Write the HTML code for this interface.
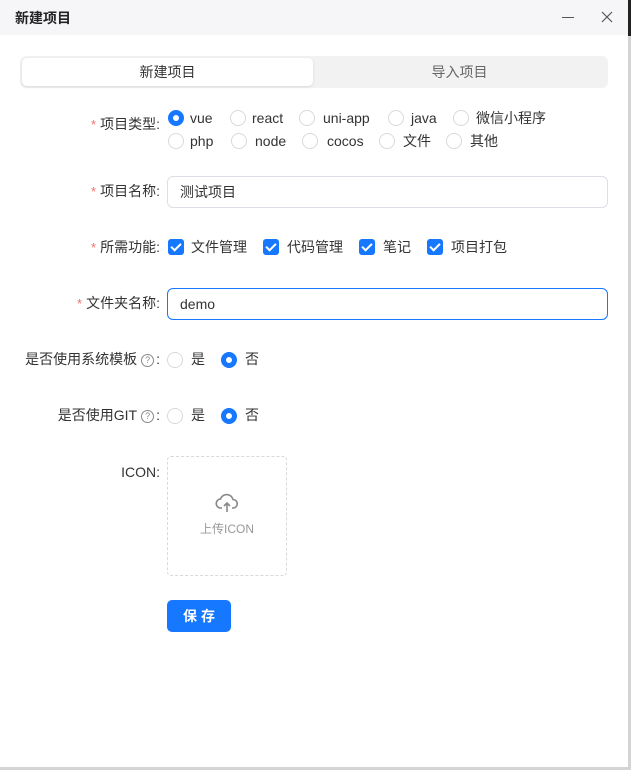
<!DOCTYPE html>
<html><head><meta charset="utf-8"><style>
*{margin:0;padding:0;box-sizing:border-box}
body{width:631px;height:770px;overflow:hidden;background:#fff;font-family:"Liberation Sans","Noto Sans CJK SC",sans-serif;font-size:14px;color:#333;position:relative}
.a{position:absolute;white-space:nowrap}
.t{line-height:20px;height:20px}
.lab{position:absolute;right:471px;line-height:20px;white-space:nowrap}
.req{color:#f56c6c;margin-right:4px;font-size:13px}
.r{position:absolute;width:16px;height:16px;border-radius:50%;border:1px solid #d9d9d9;background:#fff}
.r.on{border:5px solid #1677ff}
.c{position:absolute;width:16px;height:16px;border-radius:3px;background:#1677ff}
.c::after{content:"";position:absolute;left:5px;top:2px;width:4px;height:8px;border:solid #fff;border-width:0 2px 2px 0;transform:rotate(45deg)}
.q{display:inline-block;width:13px;height:13px;border:1px solid #888;border-radius:50%;font-size:9px;line-height:11px;text-align:center;color:#888;vertical-align:1px;margin:0 2px 0 4px}
</style></head><body>
<div class="a" style="left:0;top:0;width:631px;height:35px;background:#f6f6f9"></div>
<div class="a" style="left:15px;top:8px;font-size:14px;font-weight:bold;line-height:20px;color:#222">新建项目</div>
<div class="a" style="left:562px;top:17px;width:12px;height:1px;background:#555"></div>
<svg class="a" style="left:601px;top:11px" width="12" height="12"><path d="M1 1L11 11M11 1L1 11" stroke="#555" stroke-width="1.2"/></svg>
<div class="a" style="left:628px;top:0;width:3px;height:770px;background:#d4d4d4"></div>
<div class="a" style="left:0;top:767px;width:631px;height:3px;background:#d4d4d4"></div>
<div class="a" style="left:628px;top:0;width:3px;height:36px;background:#222"></div>

<div class="a" style="left:20px;top:56px;width:588px;height:32px;background:#f2f2f3;border-radius:6px"></div>
<div class="a" style="left:22px;top:58px;width:291px;height:28px;background:#fff;border-radius:5px;box-shadow:0 1px 3px rgba(0,0,0,.1);text-align:center;line-height:28px;color:#333">新建项目</div>
<div class="a" style="left:313px;top:58px;width:293px;height:28px;text-align:center;line-height:28px;color:#666">导入项目</div>

<div class="lab" style="top:114px"><span class="req">*</span>项目类型:</div>
<div class="r on" style="left:168px;top:110px"></div><div class="a t" style="left:190px;top:108px">vue</div>
<div class="r" style="left:230px;top:110px"></div><div class="a t" style="left:252px;top:108px">react</div>
<div class="r" style="left:299px;top:110px"></div><div class="a t" style="left:323px;top:108px">uni-app</div>
<div class="r" style="left:388px;top:110px"></div><div class="a t" style="left:411px;top:108px">java</div>
<div class="r" style="left:453px;top:110px"></div><div class="a t" style="left:476px;top:108px">微信小程序</div>
<div class="r" style="left:168px;top:133px"></div><div class="a t" style="left:190px;top:131px">php</div>
<div class="r" style="left:231px;top:133px"></div><div class="a t" style="left:255px;top:131px">node</div>
<div class="r" style="left:302px;top:133px"></div><div class="a t" style="left:327px;top:131px">cocos</div>
<div class="r" style="left:379px;top:133px"></div><div class="a t" style="left:403px;top:131px">文件</div>
<div class="r" style="left:446px;top:133px"></div><div class="a t" style="left:470px;top:131px">其他</div>

<div class="lab" style="top:181px"><span class="req">*</span>项目名称:</div>
<div class="a" style="left:167px;top:176px;width:441px;height:32px;border:1px solid #dcdfe6;border-radius:6px;padding-left:12px;line-height:30px">测试项目</div>

<div class="lab" style="top:237px"><span class="req">*</span>所需功能:</div>
<div class="c" style="left:168px;top:239px"></div><div class="a t" style="left:191px;top:237px">文件管理</div>
<div class="c" style="left:263px;top:239px"></div><div class="a t" style="left:287px;top:237px">代码管理</div>
<div class="c" style="left:359px;top:239px"></div><div class="a t" style="left:383px;top:237px">笔记</div>
<div class="c" style="left:427px;top:239px"></div><div class="a t" style="left:451px;top:237px">项目打包</div>

<div class="lab" style="top:293px"><span class="req">*</span>文件夹名称:</div>
<div class="a" style="left:167px;top:288px;width:441px;height:32px;border:1px solid #1677ff;border-radius:6px;padding-left:12px;line-height:30px">demo</div>

<div class="lab" style="top:349px">是否使用系统模板<span class="q">?</span>:</div>
<div class="r" style="left:167px;top:352px"></div><div class="a t" style="left:191px;top:349px">是</div>
<div class="r on" style="left:221px;top:352px"></div><div class="a t" style="left:245px;top:349px">否</div>

<div class="lab" style="top:405px">是否使用GIT<span class="q">?</span>:</div>
<div class="r" style="left:167px;top:408px"></div><div class="a t" style="left:191px;top:405px">是</div>
<div class="r on" style="left:221px;top:408px"></div><div class="a t" style="left:245px;top:405px">否</div>

<div class="lab" style="top:462px">ICON:</div>
<div class="a" style="left:167px;top:456px;width:120px;height:120px;border:1px dashed #d9d9d9;border-radius:4px"></div>
<svg class="a" style="left:215px;top:493px" width="24" height="20" viewBox="0 0 24 20"><path d="M7 15H6a4.5 4.5 0 0 1-.5-9A6.5 6.5 0 0 1 18 6.5a4.2 4.2 0 0 1 0 8.5h-1" fill="none" stroke="#888" stroke-width="1.6"/><path d="M12 19V10M9 13l3-3 3 3" fill="none" stroke="#888" stroke-width="1.6"/></svg>
<div class="a" style="left:167px;top:520px;width:120px;text-align:center;font-size:12px;color:#999;line-height:18px">上传ICON</div>

<div class="a" style="left:167px;top:600px;width:64px;height:32px;background:#1677ff;border-radius:5px;color:#fff;text-align:center;line-height:32px;font-weight:bold;letter-spacing:4px;padding-left:4px">保存</div>
</body></html>
